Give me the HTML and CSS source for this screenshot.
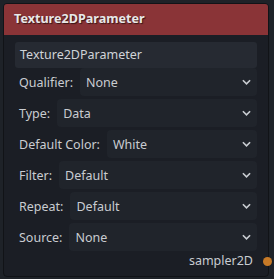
FILE: index.html
```html
<!DOCTYPE html>
<html lang="en">
<head>
    <meta charset="UTF-8">
    <title>Texture2DParameter</title>
    <link rel="stylesheet" href="styles.css">
</head>
<body>
    <div class="node">
        <div class="node-header">Texture2DParameter</div>
        <div class="node-body">
            <div class="name-field">Texture2DParameter</div>

            <div class="prop-row first">
                <span class="prop-label">Qualifier:</span>
                <div class="select"><span>None</span><svg class="chev" viewBox="0 0 10 6"><path d="M1 1l4 4 4-4"/></svg></div>
            </div>
            <div class="prop-row">
                <span class="prop-label">Type:</span>
                <div class="select"><span>Data</span><svg class="chev" viewBox="0 0 10 6"><path d="M1 1l4 4 4-4"/></svg></div>
            </div>
            <div class="prop-row">
                <span class="prop-label">Default Color:</span>
                <div class="select"><span>White</span><svg class="chev" viewBox="0 0 10 6"><path d="M1 1l4 4 4-4"/></svg></div>
            </div>
            <div class="prop-row">
                <span class="prop-label">Filter:</span>
                <div class="select"><span>Default</span><svg class="chev" viewBox="0 0 10 6"><path d="M1 1l4 4 4-4"/></svg></div>
            </div>
            <div class="prop-row">
                <span class="prop-label">Repeat:</span>
                <div class="select"><span>Default</span><svg class="chev" viewBox="0 0 10 6"><path d="M1 1l4 4 4-4"/></svg></div>
            </div>
            <div class="prop-row">
                <span class="prop-label">Source:</span>
                <div class="select"><span>None</span><svg class="chev" viewBox="0 0 10 6"><path d="M1 1l4 4 4-4"/></svg></div>
            </div>

            <div class="output">
                <span>sampler2D</span>
                <span class="port"></span>
            </div>
        </div>
    </div>
</body>
</html>
```

FILE: styles.css
```css
body {
    margin: 0;
    background: #1e2228;
    font-family: "Noto Sans", "Open Sans", sans-serif;
    font-size: 12.5px;
    color: #c9ccd1;
}
.node {
    margin: 3px 0 0 3px;
    width: 264px;
    height: 272px;
    background: #1b1e25;
    border: 1px solid #111317;
    border-radius: 4px;
}
.node-header {
    height: 31px;
    background: #8a3437;
    border-radius: 3px 3px 0 0;
    padding-left: 10px;
    line-height: 30px;
    font-weight: bold;
    font-size: 12.6px;
    color: #e8e8e8;
    text-shadow: 1px 1px 1px rgba(0, 0, 0, 0.6);
}
.node-body {
    padding: 7px 11px 0 11px;
    display: flex;
    flex-direction: column;
    gap: 3px;
}
.name-field {
    height: 26px;
    line-height: 26px;
    background: #262a32;
    border-radius: 3px;
    padding-left: 5px;
    color: #d0d3d8;
}
.prop-row {
    display: flex;
    align-items: center;
    height: 28px;
}
.prop-row.first {
    margin-top: -3px;
}
.prop-label {
    padding: 0 7px 0 4px;
    white-space: nowrap;
}
.select {
    flex: 1;
    height: 28px;
    display: flex;
    align-items: center;
    justify-content: space-between;
    padding: 0 6px 0 6px;
    background: #20242b;
    border-radius: 4px;
}
.chev {
    width: 9px;
    height: 6px;
    fill: none;
    stroke: #c9ccd1;
    stroke-width: 1.8;
}
.output {
    display: flex;
    align-items: center;
    justify-content: flex-end;
    gap: 10px;
    margin: -2px -15px 0 0;
    line-height: 18px;
}
.port {
    width: 9px;
    height: 9px;
    border-radius: 50%;
    background: #c77a27;
}
```
